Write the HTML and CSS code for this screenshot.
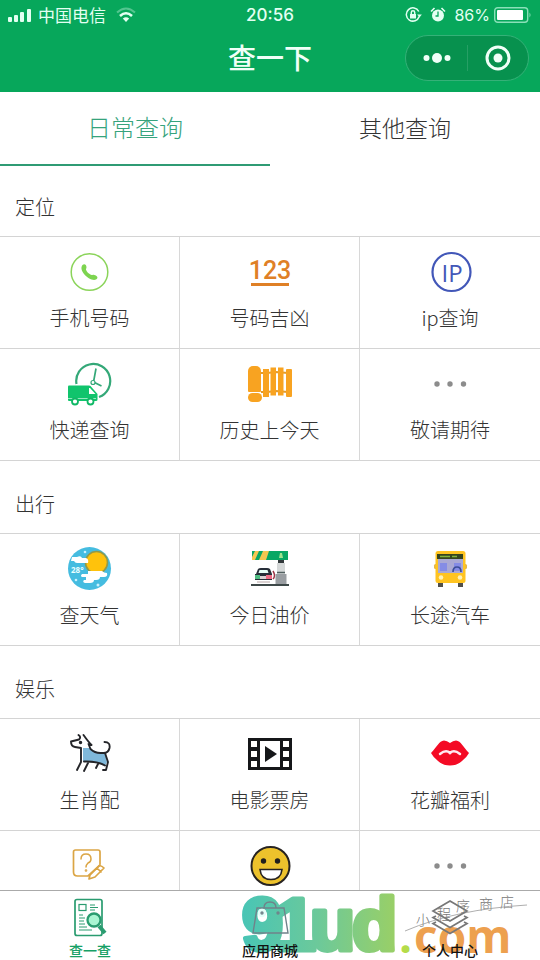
FILE: index.html
```html
<!DOCTYPE html>
<html lang="zh-CN">
<head>
<meta charset="utf-8">
<meta name="viewport" content="width=device-width, initial-scale=1">
<title>查一下</title>
<link rel="stylesheet" href="styles.css">
</head>
<body>
<div class="app">
  <header class="header">
    <div class="status">
      <div class="status-side">
        <svg width="24" height="14" viewBox="0 0 24 14" fill="#e3fff2" aria-hidden="true"><rect y="9" width="4" height="5" rx="1"/><rect x="6" y="7" width="4" height="7" rx="1"/><rect x="12" y="4" width="4" height="10" rx="1"/><rect x="19" y="1" width="4" height="13" rx="1"/></svg>
        <span class="carrier">中国电信</span>
        <svg class="wifi" width="20" height="16" viewBox="0 0 20 16" fill="none" stroke="#e3fff2" aria-hidden="true"><path d="M1 5.500Q10-2.500 19 5.500" stroke-width="2" opacity=".35"/><path d="M4 9Q10 3.500 16 9" stroke-width="2.600"/><path d="M6.800 11.500Q10 9 13.200 11.500L10 15Z" fill="#e3fff2" stroke="none"/></svg>
      </div>
      <span class="time">20:56</span>
      <div class="status-side status-right">
        <svg width="17" height="16" viewBox="0 0 17 16" fill="none" stroke="#e3fff2" stroke-width="1.500" aria-hidden="true"><path d="M13.800 4.500A6.600 6.600 0 1 0 14.200 9.500"/><path d="M12.200 7.500h4.600l-2.300 3z" fill="#e3fff2" stroke="none"/><rect x="5" y="7" width="6" height="4.500" fill="#e3fff2" stroke="none"/><path d="M6.300 7V5.500a1.700 1.700 0 0 1 3.400 0V7"/></svg>
        <svg width="16" height="16" viewBox="0 0 16 16" fill="#e3fff2" aria-hidden="true"><circle cx="8" cy="8.500" r="6"/><path d="M1 4.500 4.500 1M15 4.500 11.500 1" stroke="#e3fff2" stroke-width="1.600"/><path d="M8 4.500V9H5.500" fill="none" stroke="#07a75b" stroke-width="1.300"/></svg>
        <span class="battery-text">86%</span>
        <svg width="38" height="16" viewBox="0 0 38 16" aria-hidden="true"><rect x=".7" y=".7" width="33" height="14.600" rx="3" fill="none" stroke="#8ae0b8" stroke-width="1.400"/><rect x="3" y="3" width="26" height="10" rx="1" fill="#fff"/><path d="M35.500 5.500q2 2.500 0 5z" fill="#8ae0b8"/></svg>
      </div>
    </div>
    <div class="titlebar">
      <h1>查一下</h1>
      <div class="capsule">
        <button aria-label="更多"><svg width="28" height="12" viewBox="0 0 28 12" fill="#f0fff8"><circle cx="3.500" cy="6" r="3"/><circle cx="14" cy="6" r="5"/><circle cx="24.500" cy="6" r="3"/></svg></button>
        <button aria-label="关闭"><svg width="26" height="26" viewBox="0 0 26 26"><circle cx="13" cy="13" r="11" fill="none" stroke="#f0fff8" stroke-width="3"/><circle cx="13" cy="13" r="4.500" fill="#f0fff8"/></svg></button>
      </div>
    </div>
  </header>

  <div class="tabs">
    <button class="tab active">日常查询</button>
    <button class="tab">其他查询</button>
  </div>

  <main class="content">
    <section>
      <h2>定位</h2>
      <div class="grid">
        <a class="cell" href="#phone"><svg viewBox="0 0 44 44"><circle cx="21.500" cy="22" r="18.300" fill="none" stroke="#8bd45a" stroke-width="1.500"/><path transform="translate(0 1)" d="M14.500 14c2-1.700 4 0 4 2.200 0 1-.8 1.800-.5 2.600.7 2 2.800 4 4.800 5 1 .4 1.600-.3 2.800-.1 2 .3 4.500 1.700 3.700 3.500-1.400 2.500-5 2-8.500 0-3.500-2.300-6.700-5.800-7.300-9.200-.2-1.700.2-3.200 1-4z" fill="#7dd450"/></svg><span>手机号码</span></a>
        <a class="cell" href="#number"><svg viewBox="0 0 44 44" fill="#df8026"><text class="digits" x="22" y="29" text-anchor="middle">123</text><path d="M3 33h38v3H3z"/></svg><span>号码吉凶</span></a>
        <a class="cell" href="#ip"><svg viewBox="0 0 44 44"><circle cx="23.500" cy="22" r="19" fill="none" stroke="#4257b8" stroke-width="2.200"/><text class="ip" x="24" y="32" text-anchor="middle" fill="#4257b8">IP</text></svg><span>ip查询</span></a>
        <a class="cell" href="#express"><svg viewBox="0 0 44 44"><path d="M8.500 22A17 17 0 1 1 31 35" fill="none" stroke="#34a878" stroke-width="2.200"/><path d="M28 6.500 25.500 20l8 4" fill="none" stroke="#34a878" stroke-width="1.700"/><circle cx="25" cy="20.500" r="2" fill="#fff" stroke="#34a878" stroke-width="1.200"/><path d="M1 23.500q-1 0-1 1V38q0 1 1 1h27q1.500 0 1.500-1.500V32l-7-8q-.5-.5-1.500-.5z" fill="#10c46c"/><path d="M21 26h1l5.500 6H21z" fill="#fff"/><path d="M0 36.500h28" stroke="#b6f2d4" stroke-width=".8"/><g fill="#fff" stroke="#10b866" stroke-width="1.800"><circle cx="7" cy="39.500" r="3"/><circle cx="22.500" cy="39.500" r="3"/></g></svg><span>快递查询</span></a>
        <a class="cell" href="#history"><svg viewBox="0 0 44 44" fill="#f8a321"><path d="M13 11h6l9-1 12 1M13 30h6l9-1 12 1" fill="none" stroke="#e39b2c" stroke-width="2"/><rect x="0" y="4" width="13" height="26" rx="5"/><rect x="0" y="22" width="13" height="8" rx="1"/><rect x="0" y="31" width="14" height="9" rx="4.500"/><rect x="15" y="7" width="6" height="28"/><rect x="22.500" y="5.500" width="5.500" height="28"/><rect x="30" y="5.500" width="5.500" height="28"/><rect x="38" y="7" width="6" height="28" rx="1"/></svg><span>历史上今天</span></a>
        <a class="cell" href="#more"><svg viewBox="0 0 44 44" fill="#8c8c8c"><circle cx="9" cy="22" r="2.700"/><circle cx="22" cy="22" r="2.700"/><circle cx="35.500" cy="22" r="2.700"/></svg><span>敬请期待</span></a>
      </div>
    </section>
    <section>
      <h2>出行</h2>
      <div class="grid">
        <a class="cell" href="#weather"><svg viewBox="0 0 44 44"><circle cx="21.500" cy="21.500" r="21.500" fill="#45bce0"/><circle cx="28.500" cy="15.500" r="11" fill="#ffc20c" stroke="#92994b" stroke-width="1.600"/><path d="M4 10h5q4-2 5 1h4q3 1 2 5H9q-2 0-3-2H3z" fill="#fff"/><path d="M20 24h14q2 2 5 2 1 4-3 4h-4q0 3-4 3h-2q0 3-4 3h-5q-3-1-1-3h2v-3h-4q-2-1 0-3h6z" fill="#fff"/><g fill="#c8f1ff"><circle cx="17" cy="5" r="1.300"/><circle cx="8" cy="33" r="1.300"/><circle cx="30" cy="38" r="1.500"/></g><text class="temp" x="3" y="26" fill="#eaffff">28°</text></svg><span>查天气</span></a>
        <a class="cell" href="#fuel"><svg viewBox="0 0 44 44"><rect x="4" y="4" width="36" height="9" fill="#08a764"/><path d="m7 4-3 6v3h3l4-9zM15 4l-4 9h7l3-9z" fill="#f4c651"/><path d="M32 6h2l1 5h-4z" fill="#9be38f"/><path d="M30 13h6v3h-6z" fill="#31383a"/><path d="M29 16h8v11h-8z" fill="#d5d8d8"/><path d="M27.500 27h11v10h-11z" fill="#9a9ea2"/><path d="M29 25.500h8" stroke="#526060" stroke-width="1.500"/><path d="m8 27 2-5q1-1 3-1h6q2 0 3 1l2 5v6H7v-6z" fill="#272e38"/><path d="M11.500 23h8l1 3h-10z" fill="#e7fff7"/><path d="M7 28h5v4H7z" fill="#50bd82"/><path d="M18 28h6v4h-6z" fill="#ef6d86"/><path d="M12 29h6v3h-6zM9 34h13v2H9z" fill="#dbd2d2"/><path d="M25 32q3-3 0-8" fill="none" stroke="#9e3545" stroke-width="1.500"/><path d="M3 38h38" stroke="#3e4949" stroke-width="2"/></svg><span>今日油价</span></a>
        <a class="cell" href="#bus"><svg viewBox="0 0 44 44"><path d="M10 34h5v6h-5zM30 34h5v6h-5z" fill="#51504b"/><rect x="6" y="17" width="33" height="5" rx="1.500" fill="#e2b64b"/><rect x="7.500" y="4" width="30" height="32" rx="2.500" fill="#ffc421"/><path d="M9 7h26v5H9z" fill="#36451f"/><path d="M12 9.500h10m2 0h5" stroke="#82b53c" stroke-width="1.500"/><path d="M10 12h25v14H10z" fill="#aaa9d4"/><path d="M12 16h7v8h-7zM26 16h7v8h-7z" fill="#858ce5"/><path d="M25 25q0-5 4-5t4 5" fill="none" stroke="#3b4d99" stroke-width="1.700"/><circle cx="13" cy="30.500" r="2.300" fill="#fff1b6"/><circle cx="32" cy="30.500" r="2.300" fill="#fff1b6"/></svg><span>长途汽车</span></a>
      </div>
    </section>
    <section>
      <h2>娱乐</h2>
      <div class="grid">
        <a class="cell" href="#zodiac"><svg viewBox="0 0 44 44" fill="none" stroke="#242529" stroke-width="1.900" stroke-linecap="round" stroke-linejoin="round"><path d="M15 16h7q5 5 15 5l2 9-2 4q-9-5-22-4z" fill="#7fb8da" stroke="none"/><path d="M10.500 3q3 2 .5 4.500L3 9.500q0 5 4 5.500l6 1v14l-4 8M15.500 3q5 7 8 10-2 .5-3-1l2 5q4 4 10 4h3q5 0 6-5 1-6-5-6M37 21l3 9-2 8h-3M16 29.500q14-.5 21 4M20 31l-4 8M30 32l-2 4"/><circle cx="12.500" cy="10.500" r=".8" fill="#242529"/></svg><span>生肖配</span></a>
        <a class="cell" href="#movie"><svg viewBox="0 0 44 44"><path d="M0 6h44v32H0z" fill="#151719"/><path d="M12 9h20v26H12zM3 9h6v6H3zm0 10h6v6H3zm0 10h6v6H3zM35 9h6v6h-6zm0 10h6v6h-6zm0 10h6v6h-6z" fill="#fff"/><path d="m17 14 12 8-12 8z" fill="#151719"/></svg><span>电影票房</span></a>
        <a class="cell" href="#petal"><svg viewBox="0 0 44 44"><path d="M3 21C9 15 11 9 16 8.500q3 0 6 2.500 3-2.500 6-2.500c5 .5 7 6.500 13 12.500q-2 4-7 8-5 4.500-12 4.500T10 29q-5-4-7-8z" fill="#f40b25"/><path d="M12 22q6-5 10-1 4-4 10 1" fill="none" stroke="#ffe9f1" stroke-width="2.500" stroke-linecap="round"/></svg><span>花瓣福利</span></a>
        <a class="cell" href="#riddle"><svg viewBox="0 0 44 44" fill="none" stroke="#dba544" stroke-width="1.700" stroke-linejoin="round" stroke-linecap="round"><path d="M32 20V8q0-2-2-2H7.500q-2 0-2 2v20q0 4 4 4H20l12-11"/><path d="m22 31 9-9q2-1 5 2l-9 9-6 2zM29 24l4 4"/><path d="M13 15q0-5 5-5 5 0 5 5 0 3-3 4-2 2-2 4" stroke-width="1.500"/><circle cx="18" cy="26.500" r=".5"/></svg><span>猜谜语</span></a>
        <a class="cell" href="#joke"><svg viewBox="0 0 44 44"><circle cx="22.500" cy="22" r="19" fill="#edc22c" stroke="#272321" stroke-width="2"/><circle cx="15.500" cy="17" r="2.700" fill="#21201e"/><circle cx="29.500" cy="17" r="2.700" fill="#21201e"/><path d="M12 25.500h22q-1 10-11 10t-11-10z" fill="#fff" stroke="#272321" stroke-width="1.600"/></svg><span>笑话</span></a>
        <a class="cell" href="#soon"><svg viewBox="0 0 44 44" fill="#8c8c8c"><circle cx="9" cy="22" r="2.700"/><circle cx="22" cy="22" r="2.700"/><circle cx="35.500" cy="22" r="2.700"/></svg><span>敬请期待</span></a>
      </div>
    </section>
  </main>

  <nav class="nav">
    <svg class="watermark" viewBox="0 0 540 69">
      <defs><linearGradient id="wm" gradientUnits="userSpaceOnUse" x1="243" y1="0" x2="393" y2="0"><stop offset="0" stop-color="#49c5b5"/><stop offset=".5" stop-color="#6cc99a"/><stop offset="1" stop-color="#98cf68"/></linearGradient></defs>
      <text class="wm-main" x="242 275 310 352" y="59" fill="url(#wm)" stroke="url(#wm)">91ud</text>
      <text class="wm-dot" x="399" y="62">.</text>
      <text class="wm-com" x="414" y="62">com</text>
      <text class="wm-shop" x="416 437 456 479 500" y="34 28 20 18 16">小程序商店</text>
      <path d="M405 40C440 25 480 17 527 14" fill="none" stroke="#999" stroke-width=".8"/>
    </svg>
    <a class="nav-item active" href="#search"><svg viewBox="0 0 40 40" fill="none" stroke="#2a9c70" stroke-width="1.700"><rect x="5" y="1.500" width="27" height="36" rx="2"/><rect x="9" y="6.500" width="7" height="6" stroke-width="1.200"/><path d="M20 7h5m-5 2.500h8m-8 2.500h5M9 17h4m-4 3h6m-6 3h5m-5 3h6m-6 3h8m-8 3h13" stroke-width="1"/><path d="m29 28 6 7" stroke-width="4"/><circle cx="24" cy="22" r="6.500" fill="#a9f5d2" stroke-width="2.300"/></svg><span>查一查</span></a>
    <a class="nav-item" href="#apps"><svg viewBox="0 0 40 40" fill="none" stroke="#70828a" stroke-width="1.400"><path d="M7 10h27l4 25H3z"/><path d="M14 10q0-6 6-6t6 6"/><circle cx="12" cy="15" r="3.500" fill="#e4fffa" stroke="#e4fffa"/><circle cx="12" cy="15" r="1"/><circle cx="28" cy="15" r="1"/></svg><span>应用商城</span></a>
    <a class="nav-item" href="#me"><svg viewBox="0 0 40 40" fill="none" stroke="#777" stroke-width="1.700"><path d="m20 3 17 10-17 10L3 13zM6 18l-3 1.500 17 10 17-10L34 18M6 24l-3 1.500 17 10 17-10L34 24"/></svg><span>个人中心</span></a>
  </nav>
</div>
</body>
</html>
```
FILE: styles.css
```css
* { box-sizing: border-box; }
body { margin: 0; background: #fff; color: #333; font-family: "Noto Sans CJK SC", sans-serif; font-weight: 300; }
a { color: inherit; text-decoration: none; }
button { margin: 0; padding: 0; border: 0; background: none; color: inherit; font: inherit; }
svg { display: block; flex: none; }
.app { display: flex; flex-direction: column; height: 100vh; }

.header { flex: none; background: #07a75b; color: #e3fff2; }
.status { display: grid; grid-template-columns: 1fr auto 1fr; align-items: center; height: 30px; padding: 0 8px; font-size: 17px; line-height: 30px; }
.status-side { display: flex; align-items: center; gap: 6px; }
.carrier { font-weight: 400; }
.wifi { margin-left: 4px; }
.status-right { justify-content: flex-end; gap: 8px; }
.time { font-family: Inter, sans-serif; font-weight: 500; }
.battery-text { margin-right: -4px; font-family: Inter, sans-serif; font-size: 16px; font-weight: 400; }
.titlebar { position: relative; display: flex; align-items: center; justify-content: center; height: 62px; padding-bottom: 8px; }
h1 { margin: 0; color: #f0fff8; font-size: 28px; line-height: 40px; font-weight: 500; }
.capsule { position: absolute; top: 5px; right: 11px; display: flex; width: 124px; height: 46px; border: 1px solid #35b178; border-radius: 23px; background: #07914e; }
.capsule button { position: relative; flex: 1; display: flex; align-items: center; justify-content: center; }
.capsule button + button::before { content: ""; position: absolute; left: 0; top: 9px; width: 1px; height: 26px; background: #269f65; }

.tabs { flex: none; display: flex; height: 74px; }
.tab { flex: 1; padding-bottom: 3px; border-bottom: 2px solid transparent; font-size: 23px; line-height: 34px; }
.tab.active { color: #36a37c; border-color: #2f9b74; font-size: 24px; }

.content { flex: 1; min-height: 0; overflow: hidden; }
h2 { margin: 0; padding: 28px 15px 14px; font-size: 20px; line-height: 30px; font-weight: 300; }
section:first-child h2 { padding-top: 26px; }
.grid { display: grid; grid-template-columns: repeat(3, 1fr); border-top: 1px solid #d4d4d4; }
.cell { display: flex; flex-direction: column; align-items: center; gap: 9px; padding: 13px 0 15px; border-right: 1px solid #d8d8d8; border-bottom: 1px solid #d4d4d4; font-size: 20px; line-height: 30px; }
.cell:nth-child(3n) { border-right: 0; }
.cell svg { width: 44px; height: 44px; }
.digits { font: 500 25px Roboto, sans-serif; }
.ip { font: 400 24px "Open Sans", sans-serif; }
.temp { font: 700 8px "Open Sans", sans-serif; }

.nav { position: relative; flex: none; display: grid; grid-template-columns: repeat(3, 1fr); height: 70px; border-top: 1px solid #aaa; background: #fff; color: #111; }
.nav-item { position: relative; display: flex; flex-direction: column; align-items: center; gap: 1px; padding-top: 7px; font-size: 14px; line-height: 22px; font-weight: 500; }
.nav-item.active { color: #16a066; }
.nav-item svg { width: 40px; height: 40px; }
.watermark { position: absolute; top: 0; left: 0; width: 100%; }
.wm-main { font: 700 74px "Liberation Sans", sans-serif; stroke-width: 5px; stroke-linejoin: round; }
.wm-dot { font: 700 46px "Open Sans", sans-serif; fill: #b5dc4a; }
.wm-com { font: 700 46px "Open Sans", sans-serif; fill: #eda04f; }
.wm-shop { font: 300 14px "Noto Sans CJK SC", sans-serif; fill: #777; }
```
